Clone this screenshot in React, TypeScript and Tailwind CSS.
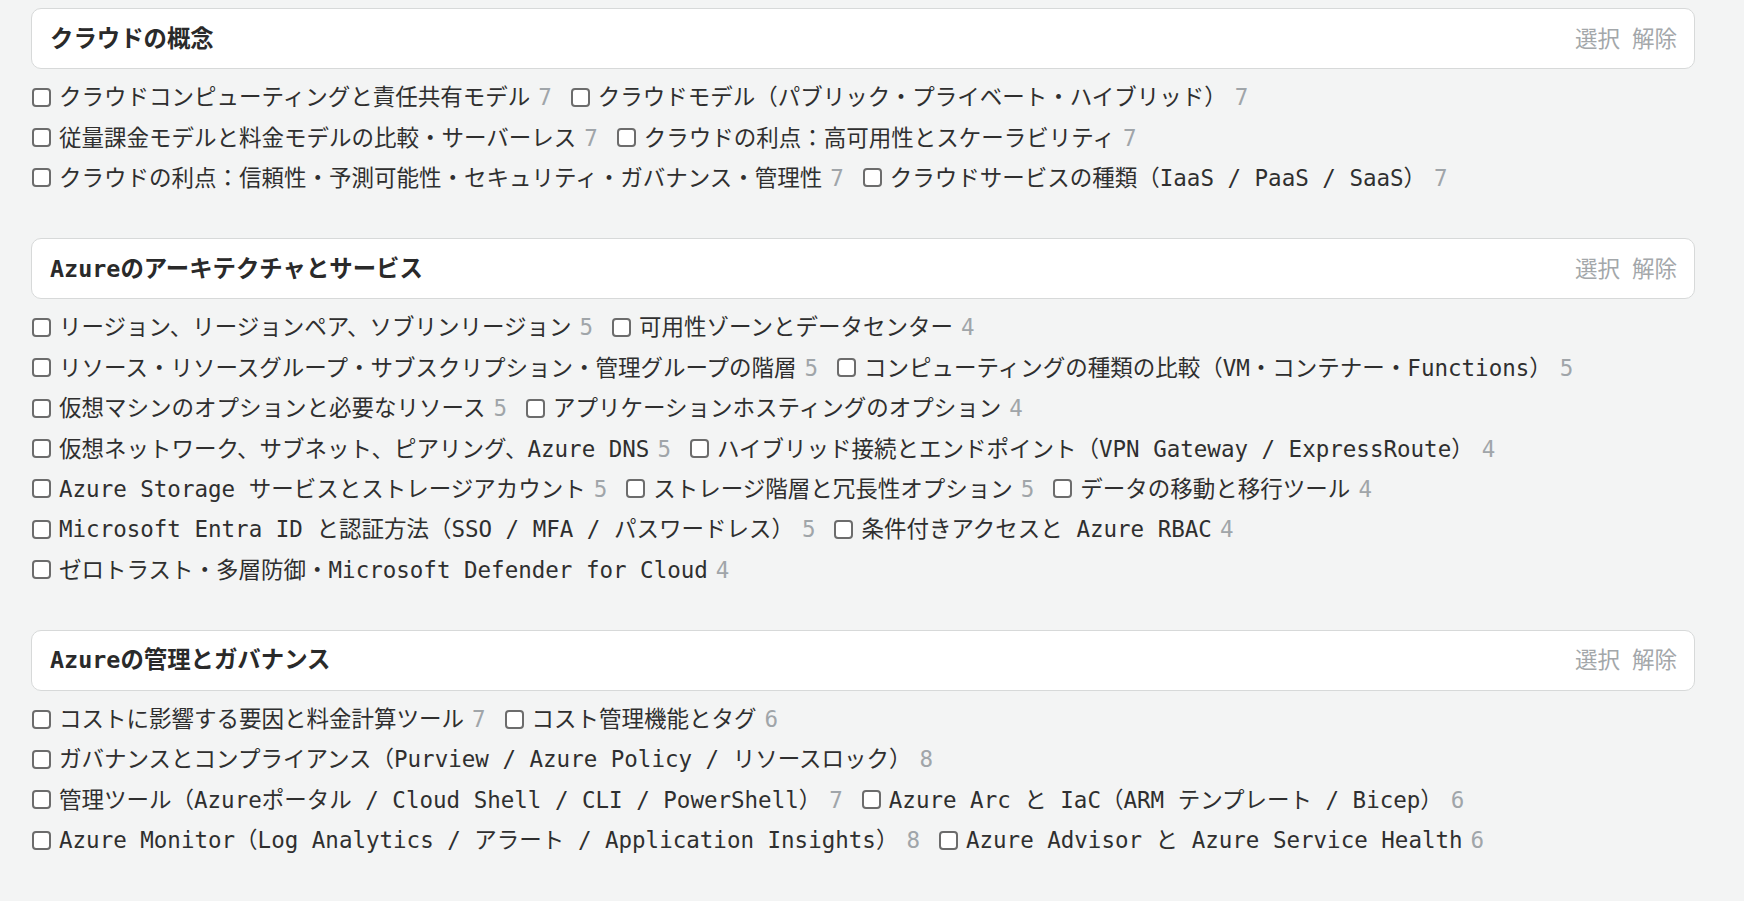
import React from "react";

type Topic = { label: string; count: number };
type Section = { title: string; topics: Topic[] };

const sections: Section[] = [
  {
    title: "クラウドの概念",
    topics: [
      { label: "クラウドコンピューティングと責任共有モデル", count: 7 },
      { label: "クラウドモデル（パブリック・プライベート・ハイブリッド）", count: 7 },
      { label: "従量課金モデルと料金モデルの比較・サーバーレス", count: 7 },
      { label: "クラウドの利点：高可用性とスケーラビリティ", count: 7 },
      { label: "クラウドの利点：信頼性・予測可能性・セキュリティ・ガバナンス・管理性", count: 7 },
      { label: "クラウドサービスの種類（IaaS / PaaS / SaaS）", count: 7 },
    ],
  },
  {
    title: "Azureのアーキテクチャとサービス",
    topics: [
      { label: "リージョン、リージョンペア、ソブリンリージョン", count: 5 },
      { label: "可用性ゾーンとデータセンター", count: 4 },
      { label: "リソース・リソースグループ・サブスクリプション・管理グループの階層", count: 5 },
      { label: "コンピューティングの種類の比較（VM・コンテナー・Functions）", count: 5 },
      { label: "仮想マシンのオプションと必要なリソース", count: 5 },
      { label: "アプリケーションホスティングのオプション", count: 4 },
      { label: "仮想ネットワーク、サブネット、ピアリング、Azure DNS", count: 5 },
      { label: "ハイブリッド接続とエンドポイント（VPN Gateway / ExpressRoute）", count: 4 },
      { label: "Azure Storage サービスとストレージアカウント", count: 5 },
      { label: "ストレージ階層と冗長性オプション", count: 5 },
      { label: "データの移動と移行ツール", count: 4 },
      { label: "Microsoft Entra ID と認証方法（SSO / MFA / パスワードレス）", count: 5 },
      { label: "条件付きアクセスと Azure RBAC", count: 4 },
      { label: "ゼロトラスト・多層防御・Microsoft Defender for Cloud", count: 4 },
    ],
  },
  {
    title: "Azureの管理とガバナンス",
    topics: [
      { label: "コストに影響する要因と料金計算ツール", count: 7 },
      { label: "コスト管理機能とタグ", count: 6 },
      { label: "ガバナンスとコンプライアンス（Purview / Azure Policy / リソースロック）", count: 8 },
      { label: "管理ツール（Azureポータル / Cloud Shell / CLI / PowerShell）", count: 7 },
      { label: "Azure Arc と IaC（ARM テンプレート / Bicep）", count: 6 },
      { label: "Azure Monitor（Log Analytics / アラート / Application Insights）", count: 8 },
      { label: "Azure Advisor と Azure Service Health", count: 6 },
    ],
  },
];

function TopicItem({ topic }: { topic: Topic }) {
  return (
    <label className="flex h-[40.4px] items-center whitespace-nowrap">
      <input
        type="checkbox"
        className="ml-[1px] mr-[8px] h-[19px] w-[19px] shrink-0 appearance-none rounded-[4px] border-2 border-[#6c6c6c] bg-white"
      />
      <span className="text-[#2f2f2f]">{topic.label}</span>
      <span className="ml-[8px] text-[#a0a5a9]">{topic.count}</span>
    </label>
  );
}

function SectionBlock({ section }: { section: Section }) {
  return (
    <section className="flex flex-col">
      <div className="flex h-[61px] items-center justify-between rounded-[10px] border border-[#d7d9d9] bg-white pl-[18px] pr-[17px]">
        <h2 className="text-[23.4px] font-bold text-[#2a2a2a]">{section.title}</h2>
        <div className="flex gap-[12px] text-[#a3a7aa]">
          <button type="button">選択</button>
          <button type="button">解除</button>
        </div>
      </div>
      <div className="mt-[8px] flex flex-wrap gap-x-[18px] pr-[70px]">
        {section.topics.map((t) => (
          <TopicItem key={t.label} topic={t} />
        ))}
      </div>
    </section>
  );
}

export default function App() {
  return (
    <div
      className="min-h-[901px] bg-[#f3f4f4] pl-[31px] pr-[49px] pt-[8px] text-[22.5px] leading-[40px]"
      style={{ fontFamily: '"DejaVu Sans Mono", "Noto Sans CJK JP", monospace' }}
    >
      <div className="flex flex-col gap-[40px]">
        {sections.map((s) => (
          <SectionBlock key={s.title} section={s} />
        ))}
      </div>
    </div>
  );
}
